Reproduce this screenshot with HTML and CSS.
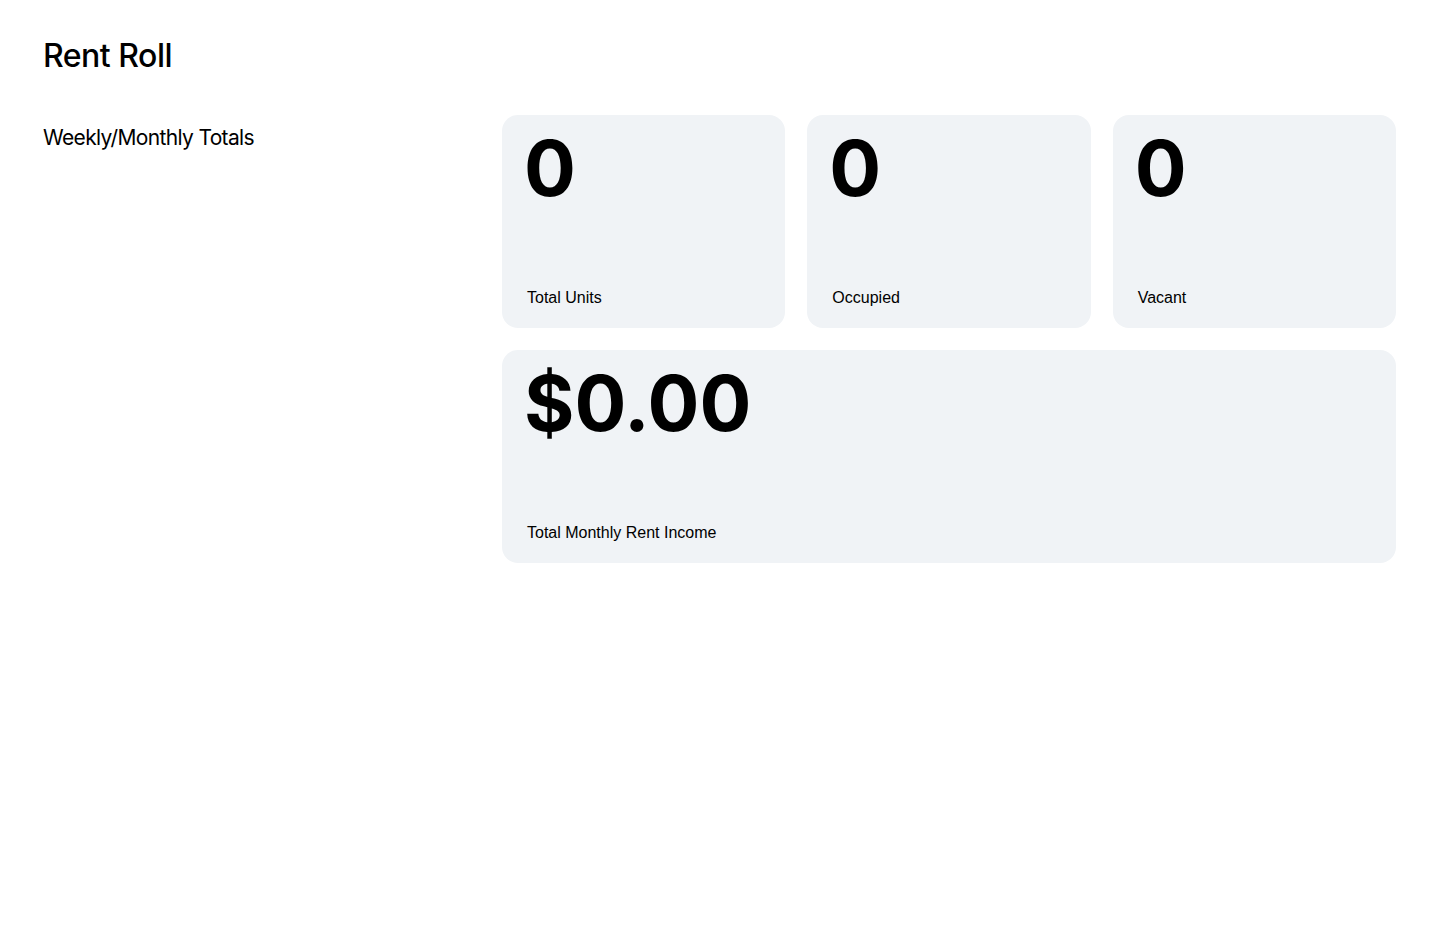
FILE: index.html
```html
<!DOCTYPE html>
<html lang="en">
<head>
    <title>Rent Roll</title>

    <link rel="stylesheet" href="styles.css">
</head>
<body>
    <div class="page">
        <h1 class="title">Rent Roll</h1>
        <div class="section">
            <div class="sectionL">
                <h2 class="sectionTitle">Weekly/Monthly Totals</h2>
            </div>
            <div class="cards">
                <div class="card">
                    <div class="num">0</div>
                    <div class="label">Total Units</div>
                </div>
                <div class="card">
                    <div class="num">0</div>
                    <div class="label">Occupied</div>
                </div>
                <div class="card">
                    <div class="num">0</div>
                    <div class="label">Vacant</div>
                </div>
                <div class="card wide">
                    <div class="num">$0.00</div>
                    <div class="label">Total Monthly Rent Income</div>
                </div>
            </div>
        </div>
    </div>
</body>
</html>
```

FILE: styles.css
```css
body{
    margin: 0;
    background-color: #ffffff;
    color: #000000;
    font-family: "Liberation Sans", Arial, sans-serif;
}
.page{
    padding: 36px 44px 40px 43px;
}
.title{
    margin: 0;
    font-family: Inter, "Liberation Sans", sans-serif;
    font-size: 32px;
    font-weight: 500;
    letter-spacing: -0.5px;
    line-height: 40px;
}
.section{
    display: grid;
    grid-template-columns: 459px 1fr;
    margin-top: 39px;
}
.sectionTitle{
    margin: 10px 0 0 0;
    font-family: Inter, "Liberation Sans", sans-serif;
    font-size: 21px;
    font-weight: 400;
    letter-spacing: -0.65px;
    line-height: 26px;
}
.cards{
    display: grid;
    grid-template-columns: repeat(3, 1fr);
    gap: 22px;
}
.card{
    display: flex;
    flex-direction: column;
    justify-content: space-between;
    height: 213px;
    box-sizing: border-box;
    padding: 10px 24px 20px 22px;
    background-color: #f0f3f6;
    border-radius: 16px;
}
.wide{
    grid-column: 1 / 4;
}
.num{
    font-family: Inter, "Liberation Sans", sans-serif;
    font-size: 77px;
    font-weight: 700;
    line-height: 86px;
}
.label{
    font-size: 16px;
    line-height: 20px;
    padding-left: 3px;
}
```
